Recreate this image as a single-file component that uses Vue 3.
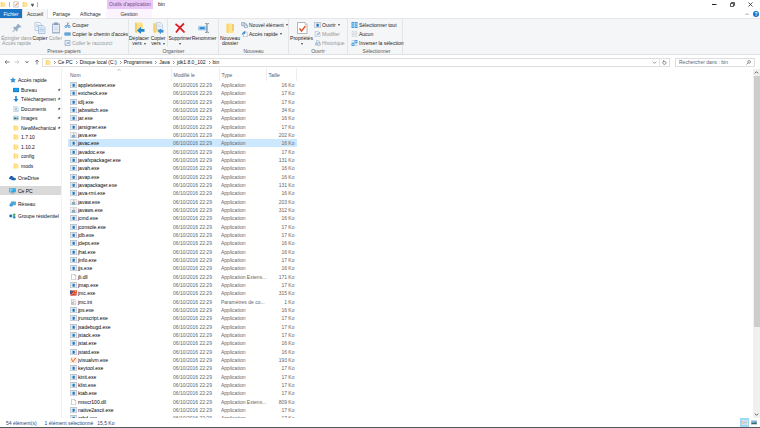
<script setup>
import { ref } from 'vue'

const tabs = ['Accueil', 'Partage', 'Affichage']

const groups = [
  {
    name: 'Presse-papiers', cls: 'g-clip',
    big: [
      { icon: 'pin-big', lines: ['Épingler dans', 'Accès rapide'], cls: 'w-34', off: true },
      { icon: 'copy-big', lines: ['Copier'], cls: 'w-14' },
      { icon: 'paste-big', lines: ['Coller'], cls: 'w-18', off: true },
    ],
    small: [
      { icon: 'cut', text: 'Couper' },
      { icon: 'path', text: "Copier le chemin d'accès" },
      { icon: 'shortcut', text: 'Coller le raccourci', off: true },
    ],
  },
  {
    name: 'Organiser', cls: 'g-org',
    big: [
      { icon: 'move-to', lines: ['Déplacer', 'vers'], cls: 'w-20', drop: true },
      { icon: 'copy-to', lines: ['Copier', 'vers'], cls: 'w-18', drop: true },
      { icon: 'delete', lines: ['Supprimer', ''], cls: 'w-25 ruled', drop: true },
      { icon: 'rename', lines: ['Renommer'], cls: 'w-24' },
    ],
    small: [],
  },
  {
    name: 'Nouveau', cls: 'g-new',
    big: [{ icon: 'folder-big', lines: ['Nouveau', 'dossier'], cls: 'w-22' }],
    small: [
      { icon: 'new-item', text: 'Nouvel élément', drop: true },
      { icon: 'quick', text: 'Accès rapide', drop: true },
    ],
  },
  {
    name: 'Ouvrir', cls: 'g-open',
    big: [{ icon: 'props', lines: ['Propriétés', ''], cls: 'w-25', drop: true }],
    small: [
      { icon: 'exe', text: 'Ouvrir', drop: true },
      { icon: 'edit', text: 'Modifier', off: true },
      { icon: 'history', text: 'Historique', off: true },
    ],
  },
  {
    name: 'Sélectionner', cls: 'g-sel',
    big: [],
    small: [
      { icon: 'sel-all', text: 'Sélectionner tout' },
      { icon: 'sel-none', text: 'Aucun' },
      { icon: 'sel-inv', text: 'Inverser la sélection' },
    ],
  },
]

const crumbs = ['Ce PC', 'Disque local (C:)', 'Programmes', 'Java', 'jdk1.8.0_102', 'bin']

const quickItems = [
  { icon: 'desktop', text: 'Bureau', pin: true },
  { icon: 'download', text: 'Téléchargements', pin: true },
  { icon: 'document', text: 'Documents', pin: true },
  { icon: 'picture', text: 'Images', pin: true },
  { icon: 'folder', text: 'NewMechanicals', pin: true },
  { icon: 'folder', text: '1.7.10' },
  { icon: 'folder', text: '1.10.2' },
  { icon: 'folder', text: 'config' },
  { icon: 'folder', text: 'mods' },
]
const places = [
  { icon: 'cloud', text: 'OneDrive' },
  { icon: 'pc', text: 'Ce PC', current: true },
  { icon: 'network', text: 'Réseau' },
  { icon: 'homegroup', text: 'Groupe résidentiel' },
]

const date = '06/10/2016 22:29'
const raw = [
  ['appletviewer.exe', 16], ['extcheck.exe', 17], ['idlj.exe', 17], ['jabswitch.exe', 34], ['jar.exe', 16],
  ['jarsigner.exe', 17], ['java.exe', 202, 'java'], ['javac.exe', 16], ['javadoc.exe', 17],
  ['javafxpackager.exe', 131], ['javah.exe', 16], ['javap.exe', 16], ['javapackager.exe', 131],
  ['java-rmi.exe', 16], ['javaw.exe', 203, 'java'], ['javaws.exe', 312, 'java'], ['jcmd.exe', 16],
  ['jconsole.exe', 17], ['jdb.exe', 17], ['jdeps.exe', 16], ['jhat.exe', 16], ['jinfo.exe', 17],
  ['jjs.exe', 16], ['jli.dll', 171, 'file', 'Application Extens...'], ['jmap.exe', 17],
  ['jmc.exe', 315, 'jmc'], ['jmc.ini', 1, 'ini', 'Paramètres de co...'], ['jps.exe', 16],
  ['jrunscript.exe', 17], ['jsadebugd.exe', 17], ['jstack.exe', 17], ['jstat.exe', 16],
  ['jstatd.exe', 16], ['jvisualvm.exe', 193, 'visualvm'], ['keytool.exe', 17], ['kinit.exe', 17],
  ['klist.exe', 17], ['ktab.exe', 17], ['msvcr100.dll', 809, 'file', 'Application Extens...'],
  ['native2ascii.exe', 17], ['orbd.exe', 17],
]
const files = raw.map(([name, size, icon = 'exe', type = 'Application']) => ({ name, size, icon, type }))
const selected = ref('javac.exe')
const search = ref('')
</script>

<template>
  <div class="window">
    <svg class="defs" width="0" height="0" aria-hidden="true">
      <symbol id="i-folder" viewBox="0 0 12 12"><path d="M1.500 1h7l1 1.500h1.500V11H1.500z" fill="#ffe394" /><path d="M1.500 1h2v10h-2z" fill="#f8d470" /></symbol>
      <symbol id="i-folder-big" viewBox="0 0 24 24"><path d="M5 3h10l4 2v17H5z" fill="#ffe394" /><path d="M5 3l5 3v17l-5-3z" fill="#f8d775" /><path d="M16 4h4v14h-4z" fill="#f5cd65" /></symbol>
      <symbol id="i-note" viewBox="0 0 12 12"><path d="M1.500.7h9v10.600h-9z" fill="#fff" stroke="#9a9a9a" /><path d="M3.500 6l2 2.500L9 3" fill="none" stroke="#e0653c" stroke-width="1.500" /></symbol>
      <symbol id="i-pin-big" viewBox="0 0 24 24"><path d="M15 4l6 6-2 1-2-.5-4 4 .5 3-2 1.500-3-3L4 20l-1.500.5L3 19l4-4.500-3-3 1.500-2 3 .5 4-4L13 4z" fill="#98aec7" /></symbol>
      <symbol id="i-copy-big" viewBox="0 0 24 24"><path d="M2 1h9l4 4v12H2z" fill="#eef4fb" stroke="#8ea6c4" /><path d="M9 7h9l4 4v12H9z" fill="#e1edfa" stroke="#7899c2" /><path d="M11 12h7M11 15h9M11 18h9M4 6h5M4 9h4" stroke="#87acd6" /></symbol>
      <symbol id="i-paste-big" viewBox="0 0 24 24"><path d="M4 3h16v20H4z" fill="#a3b5cd" /><path d="M6 6h12v14H6z" fill="#e6ecf5" /><path d="M8 1h8v5H8z" fill="#8ba0bd" /><path d="M8 10h8M8 13h8M8 16h8" stroke="#c3cfdf" /></symbol>
      <symbol id="i-cut" viewBox="0 0 12 12"><path d="M4 8L9 1M7 8L5.500 1" stroke="#66778b" stroke-width="1.200" fill="none" /><circle cx="3" cy="9" r="2" fill="none" stroke="#2486cf" stroke-width="1.500" /><circle cx="9" cy="9" r="2" fill="none" stroke="#2486cf" stroke-width="1.500" /></symbol>
      <symbol id="i-path" viewBox="0 0 12 12"><path d="M0 3h12v6H0z" fill="#2e88cd" /><path d="M1.500 6h2l1-1 1 2 1-1h1" stroke="#fff" fill="none" /><path d="M9 5v2" stroke="#d5e9f8" stroke-width="2" /></symbol>
      <symbol id="i-shortcut" viewBox="0 0 12 12"><path d="M1 1h10v10H1z" fill="#eaf0f8" stroke="#90a9c9" stroke-width="1.500" /><path d="M4 9c0-3 1-4 3-4V3.500L9.500 6 7 8V6.500" fill="#7ca0cc" /></symbol>
      <symbol id="i-move-to" viewBox="0 0 24 24"><path d="M4 1h13l3 3v17H4z" fill="#ffe08a" /><path d="M4 1l4 3v18l-4-2z" fill="#f5cd65" /><path d="M23 14h-7V9.500L8 17l8 7v-4.500h7z" fill="#2185d6" /></symbol>
      <symbol id="i-copy-to" viewBox="0 0 24 24"><path d="M3 2h13l3 3v16H3z" fill="#ffe08a" /><path d="M3 2l4 3v17l-4-2z" fill="#f5cd65" /><path d="M9 1h8l4 4v10H9z" fill="#eaf2fb" stroke="#9eb2ca" /><path d="M11 6h6M11 9h8" stroke="#b3c8df" /><path d="M23 16h-5v-3l-7 5 7 6v-3h5z" fill="#3a91d5" /></symbol>
      <symbol id="i-delete" viewBox="0 0 24 24"><path d="M3 4c6 4 12 10 18 17M20 3C14 8 8 15 4 21" stroke="#dc1f27" stroke-width="3.500" fill="none" /></symbol>
      <symbol id="i-rename" viewBox="0 0 30 24"><path d="M1 8h21v9H1z" fill="#bcdcf4" stroke="#64a8db" /><path d="M4 10h13v5H4z" fill="#2888cf" /><path d="M18 1h3l1.500 1.500L24 1h3M22.500 2v20M18 23h3l1.500-1.500L24 23h3" fill="none" stroke="#50667c" stroke-width="2" /></symbol>
      <symbol id="i-new-item" viewBox="0 0 14 12"><path d="M1 1h7v6H1z" fill="#d6e5f5" stroke="#748daa" /><path d="M4 3.500h7v5H4z" fill="#f9ecd0" stroke="#7d8fa6" /><path d="M7 6h6v5H7z" fill="#ddecfa" stroke="#5f87b4" /></symbol>
      <symbol id="i-quick" viewBox="0 0 12 12"><path d="M4 1.500h5.500l2 2v8H4z" fill="#fff" stroke="#8495aa" /><path d="M1 9C0 5 2 2.500 5 2.500V0l3.500 3.500L5 7V5C3 5 2 6.500 1 9z" fill="#2f86cd" /></symbol>
      <symbol id="i-props" viewBox="0 0 24 24"><path d="M3 1h15l4 4v18H3z" fill="#fff" stroke="#a0a0a0" stroke-width="1.500" /><path d="M18 1v4h4" fill="none" stroke="#aaa" /><path d="M7 13l4 5 8-10" fill="none" stroke="#e15a2c" stroke-width="3" /></symbol>
      <symbol id="i-exe" viewBox="0 0 14 12"><path d="M.5.5h13v11H.5z" fill="#f6f8fa" stroke="#87929d" /><path d="M1 1.500h12" stroke="#a5aeb7" /><path d="M5 3.500h4.500v6H5z" fill="#1976c8" /><path d="M2.500 4v5M11.500 4v5" stroke="#b9c2ca" /></symbol>
      <symbol id="i-edit" viewBox="0 0 12 12"><path d="M1 1h7l3 3v7.500H1z" fill="#eaf0f7" stroke="#a3b6ce" /><path d="M4 9l1-2.500L10 2l1.500 1.500L6.500 8z" fill="#90acd0" /></symbol>
      <symbol id="i-history" viewBox="0 0 14 12"><path d="M2 5h8v6H2z" fill="#b7c8dd" /><path d="M5 1h4l2 2v5H5z" fill="#e2eaf3" stroke="#94acca" /><circle cx="10" cy="8" r="3.200" fill="#eaf1f8" stroke="#86a3c6" /><path d="M10 6v2h1.500" stroke="#7593ba" fill="none" /></symbol>
      <symbol id="i-sel-all" viewBox="0 0 12 12"><path d="M0 0h12v12H0z" fill="#3f9ce0" /><path d="M6 0v12M0 6h12" stroke="#fff" /><path d="M1.500 3h3M7.500 3h3M1.500 9h3M7.500 9h3" stroke="#a5d2f3" stroke-width="2" /></symbol>
      <symbol id="i-sel-none" viewBox="0 0 12 12"><path d="M1 1h4v4H1zM7 1h4v4H7zM1 7h4v4H1zM7 7h4v4H7z" fill="#f0f2f4" stroke="#b5bbc1" stroke-dasharray="1.500 1" /></symbol>
      <symbol id="i-sel-inv" viewBox="0 0 12 12"><path d="M6 0h6v6H6zM0 6h6v6H0z" fill="#4aa2e2" /><path d="M7.500 2h3v2h-3zM1.500 8h3v2h-3z" fill="#bfe0f8" /><path d="M1 1h4v4H1zM7 7h4v4H7z" fill="#fff" stroke="#8cb9dc" /></symbol>
      <symbol id="i-star" viewBox="0 0 12 12"><path d="M6 0l1.800 3.800 4.200.5L9 7.200l.8 4.300L6 9.500l-3.800 2L3 7.200 0 4.300l4.200-.5z" fill="#2f92dc" /></symbol>
      <symbol id="i-desktop" viewBox="0 0 14 12"><path d="M0 1h14v10H0z" fill="#1278c9" /><path d="M1 2h12v7H1z" fill="#1e9bea" /></symbol>
      <symbol id="i-download" viewBox="0 0 12 12"><path d="M4.500 0h3v6h3.500L6 12 1 6h3.500z" fill="#2081d4" /></symbol>
      <symbol id="i-document" viewBox="0 0 12 12"><path d="M1.500.5h7l2 2v9h-9z" fill="#f1f6fa" stroke="#a4b0ba" /><path d="M3 4h5M3 8h6M3 10h6" stroke="#a4c4df" /><path d="M4 5h4v2H4z" fill="#5ba3d7" /></symbol>
      <symbol id="i-picture" viewBox="0 0 14 12"><path d="M.5 1.500h13v9H.5z" fill="#eff5f9" stroke="#9ba8b2" /><path d="M2 3h10v3H2z" fill="#8ac8ee" /><path d="M2 9V6l3-1 3 2 4-1v3z" fill="#39766f" /></symbol>
      <symbol id="i-cloud" viewBox="0 0 16 12"><path d="M2 9a3 3 0 0 1 0-5c1-3 6-4 8 0h1c-5 0-6 3-6 5z" fill="#0f4f9e" /><path d="M7 11a2.500 2.500 0 0 1 0-5c1-3 5-2 6 0 4 0 3 5 1 5z" fill="#1663b6" /></symbol>
      <symbol id="i-pc" viewBox="0 0 16 12"><path d="M1 .5h14v8H1z" fill="#32aeea" stroke="#4a7fa3" /><path d="M2 1h7L4 8H2z" fill="#85d1f5" /><path d="M4 11h8M8 9v2" stroke="#7b98ab" stroke-width="1.500" /></symbol>
      <symbol id="i-network" viewBox="0 0 16 12"><path d="M5 1h10v7H5z" fill="#46b0e6" stroke="#47799d" /><circle cx="5" cy="8" r="3.800" fill="#2784cd" /><path d="M2 7c2-2 3 1 6 0M5 4.500v7" stroke="#8bcdf1" fill="none" /></symbol>
      <symbol id="i-homegroup" viewBox="0 0 16 12"><path d="M4 6l8-4M4 6l8 4" stroke="#7ba8bf" /><circle cx="4" cy="6" r="3.400" fill="#226bbb" /><circle cx="12" cy="3" r="2.800" fill="#3fae5e" /><circle cx="12" cy="9" r="2.800" fill="#1d8fa9" /></symbol>
      <symbol id="i-file" viewBox="0 0 14 12"><path d="M3 .5h6l2.500 2.500v8.500H3z" fill="#fff" stroke="#9c9c9c" /><path d="M9 .5V3h2.500" fill="none" stroke="#9c9c9c" /></symbol>
      <symbol id="i-ini" viewBox="0 0 14 12"><path d="M3 .5h6l2.500 2.500v8.500H3z" fill="#fff" stroke="#9c9c9c" /><path d="M5 3h3M5 5h5" stroke="#b3b3b3" /><circle cx="6" cy="8.500" r="2" fill="none" stroke="#92999f" stroke-width="1.500" /></symbol>
      <symbol id="i-java" viewBox="0 0 14 12"><path d="M.5.500h13v11H.5z" fill="#f2f6f9" stroke="#a6b3bf" /><path d="M7.500 1c-3 3 2 2-.5 5M9 3c-2 1 0 2-1.500 3" fill="none" stroke="#e48638" /><path d="M4 7h6v1l-1 1.500H5zM3 10.500h8" stroke="#5d86ad" fill="#8facc6" /></symbol>
      <symbol id="i-jmc" viewBox="0 0 14 12"><path d="M0 1h5l9-1-1 11-12 .500z" fill="#d63c29" /><path d="M0 1l6 1-3 6H0z" fill="#375f9d" /><path d="M8 1l6-1-3 5z" fill="#f4b63b" /><path d="M3 10l4-5 2 3 3-1" fill="none" stroke="#ffd8a8" /></symbol>
      <symbol id="i-visualvm" viewBox="0 0 14 12"><path d="M1.500.5h11v11h-11z" fill="#fff3ea" stroke="#ecc9b0" /><path d="M3 3l2 6h2l2-5 3-1" fill="none" stroke="#e96a26" stroke-width="2" /></symbol>
      <symbol id="i-tack" viewBox="0 0 10 10"><path d="M6 1l3 3-1 .5-1.500 1.500L6 8 4.500 6.500 1 9l2.500-3.500L2 4l2-.5L5.500 2z" fill="#56616b" /></symbol>
    </svg>

    <header class="titlebar">
      <div class="quickbar">
        <svg class="ico"><use href="#i-folder" /></svg>
        <i class="bar"></i>
        <svg class="ico"><use href="#i-note" /></svg>
        <svg class="ico"><use href="#i-folder" /></svg>
        <button class="plain" aria-label="Personnaliser"><svg class="tri" viewBox="0 0 6 6"><path d="M0 .5h6M0 2h6L3 6z" fill="#333" stroke="#333" stroke-width=".6" /></svg></button>
        <i class="bar"></i>
      </div>
      <div class="context">Outils d'application</div>
      <h1>bin</h1>
      <div class="winctl">
        <button class="plain" aria-label="Réduire"><svg viewBox="0 0 10 10"><path d="M0 5h9" stroke="#222" stroke-width="2" /></svg></button>
        <button class="plain" aria-label="Restaurer"><svg viewBox="0 0 10 10"><path d="M1 3h6v6H1zM3 3V1h6v6H7" fill="none" stroke="#222" stroke-width="1.500" /></svg></button>
        <button class="plain" aria-label="Fermer"><svg viewBox="0 0 10 10"><path d="M1 1l8 8M9 1L1 9" stroke="#222" stroke-width="1.500" /></svg></button>
      </div>
    </header>

    <nav class="tabs">
      <button class="file">Fichier</button>
      <button v-for="(t, i) in tabs" :key="t" class="tab" :class="{ active: i === 0 }">{{ t }}</button>
      <button class="tab manage">Gestion</button>
      <span class="grow"></span>
      <button class="plain" aria-label="Réduire le ruban"><svg class="tiny" viewBox="0 0 8 8"><path d="M1 6l3-3 3 3" fill="none" stroke="#888" stroke-width="1.500" /></svg></button>
      <button class="help" aria-label="Aide">?</button>
    </nav>

    <section class="ribbon">
      <div v-for="g in groups" :key="g.name" class="group" :class="g.cls">
        <div class="tools">
          <button v-for="b in g.big" :key="b.icon" class="big" :class="[b.cls, { off: b.off }]">
            <svg><use :href="'#i-' + b.icon" /></svg>
            <span v-for="(l, i) in b.lines" :key="i" class="line">{{ l }}<i v-if="b.drop && i === b.lines.length - 1" class="drop"></i></span>
          </button>
          <div v-if="g.small.length" class="stack">
            <button v-for="s in g.small" :key="s.text" class="small" :class="{ off: s.off }">
              <svg><use :href="'#i-' + s.icon" /></svg>{{ s.text }}<i v-if="s.drop" class="drop"></i>
            </button>
          </div>
        </div>
        <div class="caption">{{ g.name }}</div>
      </div>
    </section>

    <div class="location">
      <div class="arrows">
        <button class="plain" aria-label="Précédent"><svg viewBox="0 0 12 12"><path d="M11 6H2M5.500 2.500L2 6l3.500 3.500" /></svg></button>
        <button class="plain pale" aria-label="Suivant"><svg viewBox="0 0 12 12"><path d="M1 6h9M6.500 2.500L10 6l-3.500 3.500" /></svg></button>
        <button class="plain" aria-label="Emplacements récents"><svg class="recent" viewBox="0 0 12 12"><path d="M3 4l3 4 3-4" /></svg></button>
        <button class="plain" aria-label="Dossier parent"><svg viewBox="0 0 12 12"><path d="M6 11V2M2.500 5.500L6 2l3.500 3.500" /></svg></button>
      </div>
      <div class="address">
        <svg class="ico"><use href="#i-folder" /></svg>
        <template v-for="c in crumbs" :key="c">
          <svg class="chev" viewBox="0 0 10 10"><path d="M4 2l3 3-3 3" /></svg>
          <button class="plain crumb">{{ c }}</button>
        </template>
        <span class="grow"></span>
        <button class="plain" aria-label="Historique"><svg class="end" viewBox="0 0 12 12"><path d="M2 4l4 4 4-4" /></svg></button>
        <button class="plain refresh" aria-label="Actualiser"><svg class="end" viewBox="0 0 12 12"><path d="M4 3a4 4 0 1 0 5 1M4 0v4h4" /></svg></button>
      </div>
      <label class="search">
        <input v-model="search" type="text" placeholder="Rechercher dans : bin" aria-label="Rechercher dans : bin" />
        <svg viewBox="0 0 12 12"><circle cx="7.500" cy="4.500" r="3.200" /><path d="M5 7l-4 4" /></svg>
      </label>
    </div>

    <main class="body">
      <aside class="tree">
        <a href="#" class="node root"><svg><use href="#i-star" /></svg>Accès rapide</a>
        <div class="quick">
          <a v-for="q in quickItems" :key="q.text" href="#" class="node">
            <svg><use :href="'#i-' + q.icon" /></svg><span class="label">{{ q.text }}</span>
            <svg v-if="q.pin" class="tack"><use href="#i-tack" /></svg>
          </a>
        </div>
        <a v-for="p in places" :key="p.text" href="#" class="node place" :class="{ current: p.current }">
          <svg><use :href="'#i-' + p.icon" /></svg>{{ p.text }}
        </a>
      </aside>

      <div class="list">
        <table>
          <thead>
            <tr>
              <th class="c-name">Nom<svg class="sort" viewBox="0 0 8 4"><path d="M1 3.500l3-3 3 3" fill="none" stroke="#777" /></svg></th>
              <th class="c-date">Modifié le</th>
              <th class="c-type">Type</th>
              <th class="c-size">Taille</th>
            </tr>
          </thead>
          <tbody>
            <tr v-for="f in files" :key="f.name" :class="{ selected: f.name === selected }" @click="selected = f.name">
              <td><div class="name"><svg><use :href="'#i-' + f.icon" /></svg>{{ f.name }}</div></td>
              <td>{{ date }}</td>
              <td>{{ f.type }}</td>
              <td class="num">{{ f.size }} Ko</td>
            </tr>
          </tbody>
        </table>
      </div>

      <div class="scroll">
        <svg viewBox="0 0 12 12"><path d="M2 8l4-4 4 4" /></svg>
        <div class="track"><div class="thumb"></div><div class="rest"></div></div>
        <svg viewBox="0 0 12 12"><path d="M2 4l4 4 4-4" /></svg>
      </div>
    </main>

    <footer class="status">
      <span>54 élément(s)</span>
      <span class="sel">1 élément sélectionné</span>
      <span>15,5 Ko</span>
      <span class="grow"></span>
      <button class="view on" aria-label="Détails"><svg viewBox="0 0 12 10"><path d="M0 0h12v10H0z" fill="#eef3f5" /><path d="M1 1h2v8H1z" fill="#caa899" /><path d="M4 2h7M4 5h7M4 8h7" stroke="#7c99a6" /></svg></button>
      <button class="view" aria-label="Grandes icônes"><svg viewBox="0 0 12 10"><path d="M0 0h12v10H0z" fill="#c9d0d6" /><path d="M1 2h10v6H1z" fill="#78b8e2" /><path d="M1 8V5l4 1 6-2v4z" fill="#3c6a6b" /></svg></button>
    </footer>
  </div>
</template>

<style>
body { margin: 0; overflow: hidden; }
</style>

<style scoped>
.window {
  display: flex;
  flex-direction: column;
  height: 100vh;
  box-sizing: border-box;
  border-bottom: 1px solid #55585c;
  background: #fff;
  color: #111;
  font: 5px/6px "Liberation Sans", Arial, sans-serif;
  overflow: hidden;
}
svg { display: block; flex: none; }
.defs { height: 0; }
button {
  margin: 0;
  padding: 0;
  border: 0;
  background: none;
  color: inherit;
  font: inherit;
  white-space: nowrap;
}
a { color: inherit; text-decoration: none; }
.grow { flex: 1; }
.plain { display: flex; align-items: center; }
.ico { width: 6px; height: 7px; }

.titlebar { display: flex; height: 9px; flex: none; }
.quickbar { display: flex; align-items: center; gap: 3px; width: 107px; box-sizing: border-box; }
.bar { width: 1px; height: 5px; background: #b5b5b5; }
.tri { width: 3px; height: 4px; }
.context { width: 46px; background: #e9c8f8; color: #6d4d80; text-align: center; line-height: 9px; white-space: nowrap; }
h1 { flex: 1; margin: 0; padding-left: 5px; font-size: 5px; font-weight: 400; line-height: 9px; color: #111; }
.winctl { display: flex; gap: 13px; padding-right: 7px; }
.winctl svg { width: 5px; height: 5px; }

.tabs { display: flex; align-items: stretch; height: 10px; flex: none; border-bottom: 1px solid #e4e6e9; box-sizing: border-box; color: #333; }
.file { width: 22px; background: #1a73c4; color: #fff; }
.tab { width: 26px; }
.tab + .tab { width: 27px; }
.tab + .tab + .tab { width: 31px; }
.tab.active { margin-bottom: -1px; padding-bottom: 1px; background: #f5f6f7; border: 1px solid #e4e6e9; border-width: 0 1px; box-sizing: border-box; }
.tab + .tab.manage { width: 46px; background: #fcf4ff; }
.tiny { width: 4px; height: 4px; }
.help { width: 6px; height: 6px; margin: 2px 1px 0 4px; border-radius: 50%; background: #1173cf; color: #fff; line-height: 6px; font-weight: 700; }

.ribbon { display: flex; height: 36px; flex: none; background: #f5f6f7; border-bottom: 1px solid #dfe1e4; box-sizing: border-box; color: #222; }
.group { display: flex; flex-direction: column; border-right: 1px solid #e3e5e7; box-sizing: border-box; }
.g-clip { width: 129px; }
.g-org { width: 90px; }
.g-new { width: 70px; }
.g-open { width: 59px; }
.g-sel { width: 55px; padding-left: 3px; }
.tools { display: flex; flex: 1; min-height: 0; }
.caption { height: 7px; line-height: 8px; text-align: center; color: #55585a; }
.big { display: flex; flex-direction: column; align-items: center; padding-top: 3px; line-height: 5px; }
.big svg { width: 12px; height: 12px; margin-bottom: 2px; }
.line { display: flex; align-items: center; justify-content: center; width: 0; height: 5px; gap: 2px; }
.w-14 { width: 14px; }
.w-18 { width: 18px; }
.w-20 { width: 20px; }
.w-22 { width: 22px; }
.w-24 { width: 24px; }
.w-25 { width: 25px; }
.w-34 { width: 34px; }
.ruled { border-left: 1px solid #e3e5e7; box-sizing: border-box; }
.off { color: #94979b; }
.drop { flex: none; width: 0; border: 1px solid transparent; border-top: 2px solid #444; border-bottom: 0; }
.stack { display: flex; flex-direction: column; padding-top: 1px; }
.small { display: flex; align-items: center; gap: 1px; height: 9px; }
.small svg { width: 7px; height: 6px; }
.small .drop { margin-left: 1px; }

.location { display: flex; flex: none; align-items: center; height: 13px; padding: 1px 5px 0 4px; box-sizing: border-box; }
.location svg { fill: none; stroke: #555; stroke-width: 1.500px; }
.location .ico { stroke: none; }
.arrows { display: flex; gap: 4px; margin-right: 2px; }
.arrows svg { width: 6px; height: 6px; }
.arrows .pale svg { stroke: #bbb; }
.address { display: flex; flex: 1; align-items: center; height: 9px; padding-left: 2px; border: 1px solid #dedede; box-sizing: border-box; }
.address .chev { width: 5px; height: 5px; margin: 0 1px; stroke: #777; }
.end { width: 5px; height: 5px; margin: 0 2px; }
.refresh { height: 7px; border-left: 1px solid #e3e3e3; }
.search { display: flex; align-items: center; width: 80px; height: 9px; margin-left: 5px; padding: 0 3px; border: 1px solid #dedede; box-sizing: border-box; }
.search input { flex: 1; min-width: 0; padding: 0; border: 0; outline: 0; background: none; font: inherit; color: #333; }
.search input::placeholder { color: #666; opacity: 1; }
.search svg { width: 5px; height: 5px; }

.body { display: flex; flex: 1; min-height: 0; }
.tree { width: 62px; flex: none; padding-top: 7px; border-right: 1px solid #f2f2f2; box-sizing: border-box; overflow: hidden; }
.node { display: flex; align-items: center; gap: 2px; height: 10px; padding-left: 13px; white-space: nowrap; }
.node svg { width: 6px; height: 6px; }
.node.root { padding-left: 10px; }
.quick .node { height: 9px; }
.quick .node:nth-child(even) { height: 10px; }
.quick { padding-bottom: 2px; }
.label { width: 35px; overflow: hidden; }
.quick .node .tack { width: 4px; height: 4px; margin-left: -1px; }
.place { height: 12px; padding-left: 9px; }
.place.current { height: 9px; margin: 2px 0 3px; background: #d9d9d9; }
.place svg { width: 7px; }

.list { flex: 1; min-width: 0; overflow: hidden; padding-left: 6px; }
table { width: 229px; table-layout: fixed; border-collapse: collapse; color: #666; }
th, td { box-sizing: border-box; padding: 0 0 0 2px; font-weight: 400; text-align: left; white-space: nowrap; }
th { position: relative; height: 13px; color: #4c607a; border-right: 1px solid #eee; }
.c-name { width: 103px; }
.c-date { width: 48px; }
.c-type { width: 47px; }
td { height: 8px; line-height: 8px; }
tbody tr:nth-child(3n) td { height: 9px; }
.selected { background: #cce8ff; }
.name { display: flex; align-items: center; gap: 1px; color: #000; }
.name svg { width: 7px; height: 6px; }
td.num { padding-right: 2px; text-align: right; }
.sort { position: absolute; top: 1px; left: 49px; width: 4px; height: 2px; }

.scroll { display: flex; flex-direction: column; align-items: center; width: 7px; margin-top: 1px; background: #f0f0f0; }
.scroll svg { width: 5px; height: 7px; fill: none; stroke: #444; stroke-width: 2px; }
.track { display: flex; flex: 1; flex-direction: column; width: 100%; }
.thumb { flex: 75; margin-left: 1px; background: #cdcdcd; }
.rest { flex: 25; }

.status { display: flex; flex: none; align-items: center; height: 9px; padding: 0 2px 0 6px; color: #26477c; }
.sel { margin: 0 4px 0 8px; }
.view { display: flex; align-items: center; justify-content: center; width: 9px; height: 9px; }
.view svg { width: 6px; height: 5px; }
.view.on { background: #9bd9f4; }
</style>
